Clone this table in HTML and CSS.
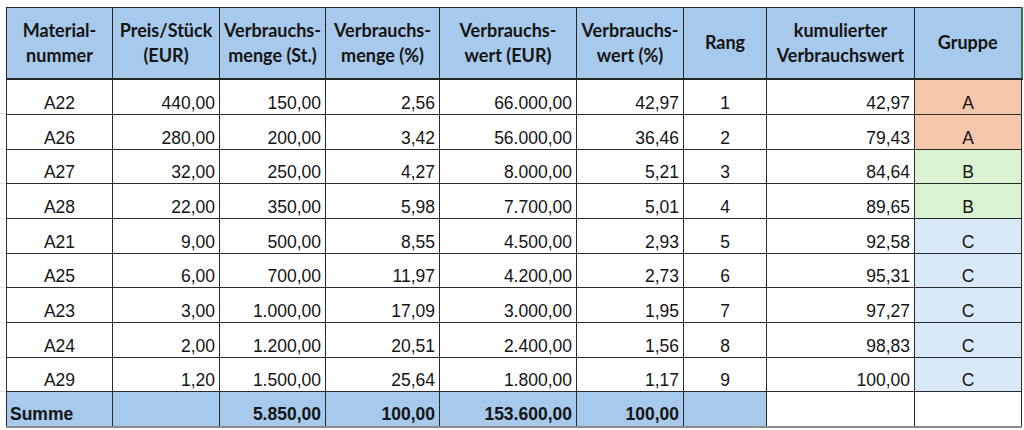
FILE: index.html
```html
<!DOCTYPE html>
<html lang="de">
<head>
<meta charset="utf-8">
<title>ABC-Analyse</title>
<link rel="stylesheet" href="styles.css">
</head>
<body>
<div class="sheet">
<table class="abc">
  <colgroup>
    <col class="c1"><col class="c2"><col class="c3"><col class="c4"><col class="c5"><col class="c6"><col class="c7"><col class="c8"><col class="c9">
  </colgroup>
  <thead>
    <tr>
      <th>Material-<br>nummer</th>
      <th>Preis/Stück<br>(EUR)</th>
      <th>Verbrauchs-<br>menge (St.)</th>
      <th>Verbrauchs-<br>menge (%)</th>
      <th>Verbrauchs-<br>wert (EUR)</th>
      <th>Verbrauchs-<br>wert (%)</th>
      <th>Rang</th>
      <th>kumulierter<br>Verbrauchswert</th>
      <th class="sel">Gruppe</th>
    </tr>
  </thead>
  <tbody>
    <tr><td class="ctr">A22</td><td>440,00</td><td>150,00</td><td>2,56</td><td>66.000,00</td><td>42,97</td><td class="ctr">1</td><td>42,97</td><td class="ctr ga">A</td></tr>
    <tr><td class="ctr">A26</td><td>280,00</td><td>200,00</td><td>3,42</td><td>56.000,00</td><td>36,46</td><td class="ctr">2</td><td>79,43</td><td class="ctr ga">A</td></tr>
    <tr class="short"><td class="ctr">A27</td><td>32,00</td><td>250,00</td><td>4,27</td><td>8.000,00</td><td>5,21</td><td class="ctr">3</td><td>84,64</td><td class="ctr gb">B</td></tr>
    <tr><td class="ctr">A28</td><td>22,00</td><td>350,00</td><td>5,98</td><td>7.700,00</td><td>5,01</td><td class="ctr">4</td><td>89,65</td><td class="ctr gb">B</td></tr>
    <tr><td class="ctr">A21</td><td>9,00</td><td>500,00</td><td>8,55</td><td>4.500,00</td><td>2,93</td><td class="ctr">5</td><td>92,58</td><td class="ctr gc">C</td></tr>
    <tr class="short"><td class="ctr">A25</td><td>6,00</td><td>700,00</td><td>11,97</td><td>4.200,00</td><td>2,73</td><td class="ctr">6</td><td>95,31</td><td class="ctr gc">C</td></tr>
    <tr><td class="ctr">A23</td><td>3,00</td><td>1.000,00</td><td>17,09</td><td>3.000,00</td><td>1,95</td><td class="ctr">7</td><td>97,27</td><td class="ctr gc">C</td></tr>
    <tr><td class="ctr">A24</td><td>2,00</td><td>1.200,00</td><td>20,51</td><td>2.400,00</td><td>1,56</td><td class="ctr">8</td><td>98,83</td><td class="ctr gc">C</td></tr>
    <tr class="short"><td class="ctr">A29</td><td>1,20</td><td>1.500,00</td><td>25,64</td><td>1.800,00</td><td>1,17</td><td class="ctr">9</td><td>100,00</td><td class="ctr gc">C</td></tr>
  </tbody>
  <tfoot>
    <tr>
      <td class="sum-label">Summe</td>
      <td class="sum"></td>
      <td class="sum">5.850,00</td>
      <td class="sum">100,00</td>
      <td class="sum">153.600,00</td>
      <td class="sum">100,00</td>
      <td class="sum"></td>
      <td></td>
      <td></td>
    </tr>
  </tfoot>
</table>
</div>
</body>
</html>
```

FILE: styles.css
```css
html, body {
  margin: 0;
  padding: 0;
  background: #ffffff;
}

.sheet {
  padding: 7px 0 0 6px;
  background:
    linear-gradient(#e3e3e3, #e3e3e3) 0 113px / 6px 1px no-repeat,
    linear-gradient(#e3e3e3, #e3e3e3) 0 148px / 6px 1px no-repeat,
    linear-gradient(#e3e3e3, #e3e3e3) 0 183px / 6px 1px no-repeat,
    linear-gradient(#e3e3e3, #e3e3e3) 0 218px / 6px 1px no-repeat,
    linear-gradient(#e3e3e3, #e3e3e3) 0 252px / 6px 1px no-repeat,
    linear-gradient(#e3e3e3, #e3e3e3) 0 287px / 6px 1px no-repeat,
    linear-gradient(#e3e3e3, #e3e3e3) 0 322px / 6px 1px no-repeat,
    linear-gradient(#e3e3e3, #e3e3e3) 0 357px / 6px 1px no-repeat,
    linear-gradient(#e3e3e3, #e3e3e3) 0 391px / 6px 1px no-repeat;
}

.abc {
  border-collapse: collapse;
  table-layout: fixed;
  width: 1015px;
  font-family: "Liberation Sans", Arial, sans-serif;
  font-size: 17.5px;
  color: #141414;
}

.c1 { width: 106px; }
.c2 { width: 107px; }
.c3 { width: 106px; }
.c4 { width: 114px; }
.c5 { width: 137px; }
.c6 { width: 107px; }
.c7 { width: 83px; }
.c8 { width: 148px; }
.c9 { width: 107px; }

.abc th {
  height: 69px;
  background: #a7c9eb;
  border: 1px solid #262626;
  border-bottom-width: 2px;
  font-family: Lato, "Open Sans", sans-serif;
  font-weight: 700;
  font-size: 18px;
  line-height: 25px;
  color: #141414;
  text-align: center;
  vertical-align: middle;
  padding: 0 2px 1px 2px;
  white-space: nowrap;
}

.abc th.sel {
  border-right: 2px solid #2f7d4c;
}

.abc td {
  height: 33px;
  border: 1px solid #2a2a2a;
  text-align: right;
  vertical-align: bottom;
  padding: 0 4px 1px 4px;
  line-height: 20px;
  white-space: nowrap;
}

.abc tbody tr.short td {
  height: 32px;
}

.abc td.ctr {
  text-align: center;
}

.abc td.ga { background: #f7c7ab; }
.abc td.gb { background: #daf2d0; }
.abc td.gc { background: #dae9f8; }

.abc tfoot td {
  height: 32px;
  font-weight: 700;
  border-bottom: 2px solid #8a8a8a;
  padding-bottom: 2px;
}

.abc td.sum,
.abc td.sum-label {
  background: #a7c9eb;
}

.abc td.sum-label {
  text-align: left;
  padding-left: 3px;
}
```
